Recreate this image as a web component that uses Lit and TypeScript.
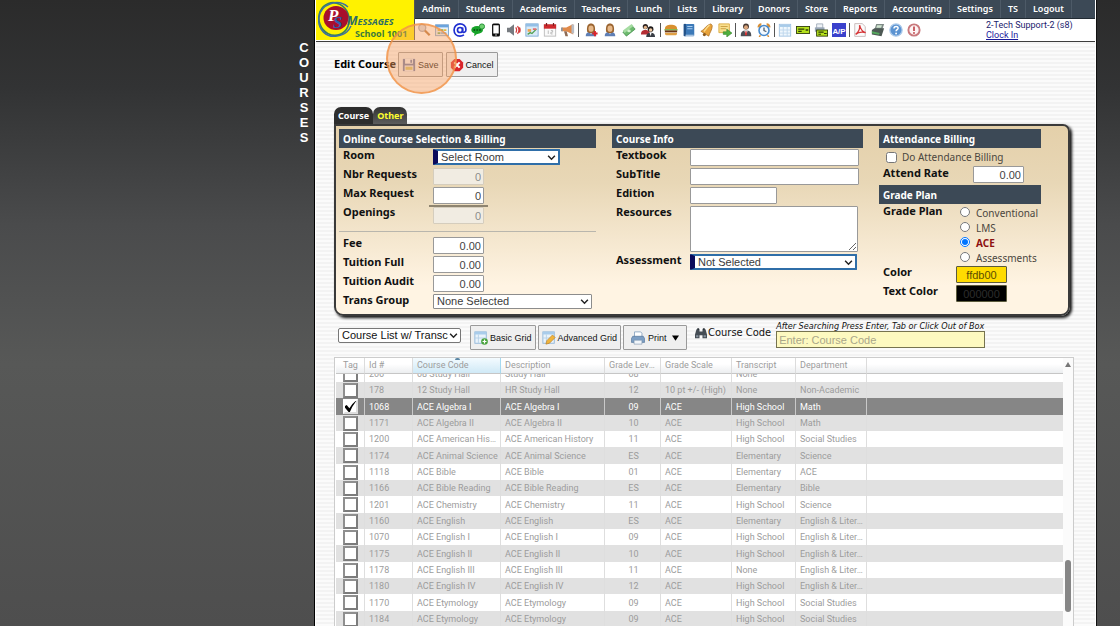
import { LitElement, html, css, svg, TemplateResult } from "lit";
import { customElement, state } from "lit/decorators.js";
import { classMap } from "lit/directives/class-map.js";

const icon = (body: TemplateResult) =>
  html`<svg class="ico" viewBox="0 0 16 16" aria-hidden="true">${body}</svg>`;

const person = svg`<path d="M2 15c0-4 2.500-5 6-5s6 1 6 5z" fill="#5f7fb5"/><path d="M6 9h4l-2 4z" fill="#f3e3c8"/><path d="M3.600 10C2.500 3 5 .5 8 .5s5.500 2.500 4.400 9.500L10 11.500H6z" fill="#9a6430"/><ellipse cx="8" cy="6.500" rx="2.900" ry="3.600" fill="#e7b98a"/>`;

const icons: Record<string, TemplateResult> = {
  search: svg`<circle cx="6" cy="5.500" r="4" fill="#d9dde4" stroke="#a9a9b4" stroke-width="1.500"/><path d="M9 8.500l5.500 5.500" stroke="#b9773c" stroke-width="2.600"/>`,
  windows: svg`<rect x=".7" y="2" width="14.600" height="12.500" fill="#e8f1fa" stroke="#6f9fce"/><rect x="1" y="2.300" width="14" height="2.700" fill="#6aa4dd"/><path d="M3 7h3v2H3zM10 7h3v2h-3z" fill="#e5b93c"/><path d="M6.500 7h3v2h-3zM3 10.500h3v2H3z" fill="#70b35c"/><path d="M6.500 10.500h6.500v2H6.500z" fill="#8bb4df"/>`,
  at: svg`<g fill="none" stroke="#1f2fd0" stroke-width="1.900"><circle cx="8" cy="8" r="2.900"/><path d="M11 5v4.600c0 2 3.800 1.400 3.800-2C14.800 3.500 11.800 1 8 1S1.200 4 1.200 8 4 15 8 15c1.800 0 3.200-.5 4.500-1.400"/></g>`,
  chat: svg`<ellipse cx="7" cy="8" rx="6.700" ry="4.500" fill="#17a329"/><path d="M4 11l-.3 4 4.500-3.500z" fill="#17a329"/><circle cx="12.500" cy="4" r="3" fill="#6fd06f" stroke="#16882a"/><path d="M3 8h1.600M6.200 8h1.600M9.400 8H11" stroke="#053d0b" stroke-width="1.600"/>`,
  phone: svg`<rect x="3.500" y=".5" width="9" height="15" rx="1.800" fill="#0c0c0c"/><rect x="4.900" y="2.600" width="6.200" height="9.400" fill="#fff"/><circle cx="8" cy="13.700" r=".8" fill="#fff"/>`,
  speaker: svg`<path d="M0 5.500h3l5-4v13l-5-4H0z" fill="#777b80"/><path d="M10 5q2 3 0 6M12 3.500q3.300 4.500 0 9M14.200 5q1.600 3 0 6" fill="none" stroke="#d33a3a" stroke-width="1.400"/>`,
  chart: svg`<rect x="1" y="1" width="14" height="14" fill="#d8eaf8" stroke="#7aa9d3"/><path d="M1 1h14v3H1z" fill="#93bfe6"/><path d="M3 7h4v3H3z" fill="#f0a14c"/><path d="M3 13l3-2 2 1 5-5" stroke="#52a052" stroke-width="1.500" fill="none"/><path d="M9 6h4v2H9z" fill="#e26f6f"/>`,
  calendar: svg`<rect x="1.500" y="2" width="13" height="13" fill="#fafafa" stroke="#b9b9b9"/><rect x="1" y="1.500" width="14" height="5" fill="#cf2a2e"/><path d="M4 0v3M12 0v3" stroke="#7d1b1d" stroke-width="1.400"/><path d="M6 8.500v4M9 8.500h2v2H9v2h2" stroke="#b5b5b5" fill="none"/>`,
  horn: svg`<path d="M1 5h5l8-4v12L6 9.500H1z" fill="#e08a4b"/><path d="M12 1.500l3 .5v9.500l-3 1z" fill="#b9bdc4"/><path d="M3.500 9.500h3L8 15H5z" fill="#8f6c55"/><path d="M0 5h2v4.500H0z" fill="#8f949c"/>`,
  personAdd: svg`${person}<path d="M12.500 9v6M9.500 12h6" stroke="#d9232b" stroke-width="2.200"/>`,
  person,
  cash: svg`<path d="M1 10.500L11.500 3 15 7 5 15z" fill="#6cb96d" stroke="#3f8a49" stroke-width=".8"/><path d="M1 8.500L11 1l2 2.500-10 8z" fill="#a5dca2"/><ellipse cx="8" cy="9" rx="2" ry="1.600" fill="#d5f2d0"/>`,
  people: svg`<circle cx="5" cy="4" r="3" fill="#2d2422"/><circle cx="5" cy="5" r="1.900" fill="#e3b48a"/><path d="M0 13c0-4 2-5 5-5s5 1 5 5z" fill="#b52d34"/><circle cx="11" cy="7" r="3.200" fill="#1f1b1b"/><circle cx="11" cy="8" r="2" fill="#efcaa4"/><path d="M6 16c0-4 2-5 5-5s5 1 5 5z" fill="#383c44"/><path d="M10 11.500h2L11 15z" fill="#fff"/>`,
  burger: svg`<path d="M1 7c0-4 3-5 7-5s7 1 7 5z" fill="#d9902f"/><path d="M.5 7h15v1.600H.5z" fill="#7bb241"/><path d="M1 8.500h14v2.200H1z" fill="#6a3418"/><path d="M1 11h14c0 2.500-1 3-3 3H4c-2 0-3-.5-3-3z" fill="#e0a044"/>`,
  book: svg`<rect x="2" y="1" width="12" height="14" rx="1" fill="#3c79b8"/><path d="M2 1h2.500v14H2z" fill="#245288"/><path d="M6 4h6M6 6.500h6" stroke="#a8cdf0" stroke-width="1.200"/><path d="M4 14h9.500" stroke="#dfe9f4"/>`,
  bell: svg`<path d="M12.500 1C6 3 6 7 1 9.500L10 15c1-4 4-7 4-12z" fill="#e8a33b" stroke="#a8681b" stroke-width=".8"/><path d="M11 2.500C7.500 4.500 7 8 4.500 9.500" stroke="#fbdc8c" stroke-width="1.600" fill="none"/><circle cx="5" cy="13.200" r="1.800" fill="#8c5a1d"/>`,
  noteArrow: svg`<path d="M1 1h12v10H1z" fill="#f9df8e" stroke="#d9a93f"/><path d="M3 4h8M3 6.500h6" stroke="#c69a3c"/><path d="M6 10h4V7l6 4.500-6 4.500v-3H6z" fill="#4fae3d" stroke="#2d7d24" stroke-width=".6"/>`,
  suit: svg`<circle cx="8" cy="4" r="3.400" fill="#4a3a33"/><circle cx="8" cy="5" r="2.300" fill="#dba67c"/><path d="M2 15c0-5 1.500-6.500 6-6.500s6 1.500 6 6.500z" fill="#4c4f56"/><path d="M6 8.500h4L8 14z" fill="#fff"/><path d="M7.500 9h1l.8 4L8 14.500 6.700 13z" fill="#d42a2a"/>`,
  clock: svg`<path d="M2 5a3 3 0 013-3.500M14 5a3 3 0 00-3-3.500" stroke="#d98f35" stroke-width="2.600" fill="none"/><circle cx="8" cy="8.500" r="5.700" fill="#f3f9ff" stroke="#4689cc" stroke-width="1.800"/><path d="M8 5v3.800l2.700 1" stroke="#3d4a58" fill="none" stroke-width="1.300"/><path d="M4 14l-1.500 2M12 14l1.500 2" stroke="#d98f35" stroke-width="1.600"/>`,
  sheet: svg`<rect x="1.500" y="1.500" width="13" height="13.500" fill="#eff7fd" stroke="#9ec2e2"/><path d="M2 2h12v2.500H2z" fill="#a8cbe9"/><path d="M6 4.500V15M10.500 4.500V15M2 8h12M2 11.500h12" stroke="#bcd6ec"/>`,
  check: svg`<rect x=".5" y="4" width="15" height="8" fill="#b4e01c" stroke="#2d3b08"/><path d="M2.500 7h7M2.500 9.500h4M11 8h3" stroke="#2d3b08" stroke-width="1.500"/>`,
  printCheck: svg`<path d="M3 1h7v5H3z" fill="#eef2f6" stroke="#8a98a8" stroke-width=".8"/><path d="M1 5h11v5H1z" fill="#98a6b6"/><rect x="3" y="8" width="12.500" height="7" fill="#b4e01c" stroke="#2d3b08"/><path d="M5 10.500h6M5 12.800h3M11.500 12h3" stroke="#2d3b08" stroke-width="1.300"/>`,
  ap: svg`<rect width="16" height="16" fill="#3a41cc"/><text x="8" y="12" text-anchor="middle" font-family="Liberation Sans" font-weight="700" font-size="9" fill="#fff">A/P</text>`,
  pdf: svg`<path d="M2 .7h8.500L14 4v11.300H2z" fill="#fbfbfb" stroke="#c3b6b6"/><path d="M3 13c4-3 5-7 4.500-10.500C9 8 11 10.500 14.500 11 10 10 6 10.500 3 13z" fill="none" stroke="#d7383a" stroke-width="1.500"/>`,
  register: svg`<path d="M6 1h9l-2 6H4z" fill="#7e8a86"/><path d="M7 2.500h5.500l-1 3H6z" fill="#cfe5cf"/><path d="M1 8l3-2h11l-1 3-2 6-11-2z" fill="#4d5854"/><path d="M1 9.500l9 2-1 2-8-1.700z" fill="#54a85c"/>`,
  help: svg`<circle cx="8" cy="8" r="7" fill="#5b93d1" stroke="#a9c8ea" stroke-width="1.500"/><path d="M5.700 6.200C5.700 3 10.600 3.300 10.400 6c-.1 1.600-2.300 1.700-2.300 3.500" stroke="#fff" stroke-width="1.700" fill="none"/><circle cx="8.100" cy="11.900" r="1.100" fill="#fff"/>`,
  alert: svg`<circle cx="8" cy="8" r="6.400" fill="#fdf4f4" stroke="#c9797d" stroke-width="2.200"/><path d="M8 4v5" stroke="#c24b50" stroke-width="2"/><circle cx="8" cy="11.400" r="1.100" fill="#c24b50"/>`,
};

const toolGroups: [string, string][][] = [
  [["search", "Search"], ["windows", "Dashboard"], ["at", "Email"], ["chat", "Chat"], ["phone", "Text message"], ["speaker", "Announcements"], ["chart", "Charts"], ["calendar", "Calendar"], ["horn", "Broadcast"]],
  [["personAdd", "Add student"], ["person", "Student"], ["cash", "Payments"], ["people", "Families"]],
  [["burger", "Lunch"], ["book", "Grade book"], ["bell", "Bell"], ["noteArrow", "Send note"]],
  [["suit", "Staff"], ["clock", "Time clock"]],
  [["sheet", "Ledger"], ["check", "Checks"], ["printCheck", "Print checks"], ["ap", "Accounts payable"]],
  [["pdf", "PDF"], ["register", "Register"], ["help", "Help"], ["alert", "Alerts"]],
];

const menu = ["Admin", "Students", "Academics", "Teachers", "Lunch", "Lists", "Library", "Donors", "Store", "Reports", "Accounting", "Settings", "TS", "Logout"];

type Row = [string, string, string, string, string, string, string];
const courses: Row[] = [
  ["206", "08 Study Hall", "Study Hall", "08", "", "None", ""],
  ["178", "12 Study Hall", "HR Study Hall", "12", "10 pt +/- (High)", "None", "Non-Academic"],
  ["1068", "ACE Algebra I", "ACE Algebra I", "09", "ACE", "High School", "Math"],
  ["1171", "ACE Algebra II", "ACE Algebra II", "10", "ACE", "High School", "Math"],
  ["1200", "ACE American History", "ACE American History", "11", "ACE", "High School", "Social Studies"],
  ["1174", "ACE Animal Science", "ACE Animal Science", "ES", "ACE", "Elementary", "Science"],
  ["1118", "ACE Bible", "ACE Bible", "01", "ACE", "Elementary", "ACE"],
  ["1166", "ACE Bible Reading", "ACE Bible Reading", "ES", "ACE", "Elementary", "Bible"],
  ["1201", "ACE Chemistry", "ACE Chemistry", "11", "ACE", "High School", "Science"],
  ["1160", "ACE English", "ACE English", "ES", "ACE", "Elementary", "English & Literature"],
  ["1070", "ACE English I", "ACE English I", "09", "ACE", "High School", "English & Literature"],
  ["1175", "ACE English II", "ACE English II", "10", "ACE", "High School", "English & Literature"],
  ["1178", "ACE English III", "ACE English III", "11", "ACE", "None", "English & Literature"],
  ["1180", "ACE English IV", "ACE English IV", "12", "ACE", "High School", "English & Literature"],
  ["1170", "ACE Etymology", "ACE Etymology", "09", "ACE", "High School", "Social Studies"],
  ["1184", "ACE Etymology", "ACE Etymology", "09", "ACE", "High School", "Social Studies"],
];

const base = css`
  * { box-sizing: border-box; }
  button, input, select, textarea { margin: 0; font-family: "Liberation Sans", Arial, sans-serif; }
  .ico { display: block; width: 14px; height: 14px; }
  select {
    appearance: none; border: 1px solid #8c8c8c; border-radius: 1px; color: #3b3b3b;
    font-size: 11px; height: 15px; line-height: 13px; padding: 0 14px 0 3px;
    background: #fff url('data:image/svg+xml,<svg xmlns="http://www.w3.org/2000/svg" viewBox="0 0 8 8"><path d="M1 2.500l3 3 3-3" fill="none" stroke="%23222" stroke-width="1.300"/></svg>') no-repeat right 2px center / 9px 9px;
  }
`;

@customElement("top-bar")
export class TopBar extends LitElement {
  static styles = [base, css`
    :host { display: flex; height: 42px; border-bottom: 1px solid #3c3c3c; background: #fff; }
    .brand { flex: none; width: 99px; background: #fff200; border-right: 1px solid #555; display: flex; text-decoration: none; height: 40px; }
    .brand svg { width: 98px; height: 40px; display: block; }
    .right { flex: 1; min-width: 0; display: flex; flex-direction: column; }
    nav { display: flex; height: 19px; background: #3c4956; border-bottom: 1px solid #222b33; }
    nav a { padding: 0 7px; font: 600 9px/18px "Noto Sans", sans-serif; color: #fff; text-decoration: none; border-right: 1px solid #4d5a67; white-space: nowrap; }
    .tools { display: flex; flex: 1; align-items: center; gap: 3px; padding-left: 2px; }
    .group { display: flex; gap: 4px; }
    .group.wide { gap: 5px; padding: 0 2px; }
    .tool { border: 0; padding: 0; background: none; }
    .sep { width: 1px; height: 14px; background: #555; }
    .user { margin-left: auto; width: 109px; font: 9px/10px Roboto, sans-serif; color: #1c1c6e; white-space: nowrap; }
    .user a { color: #1a1a9c; display: block; }
  `];

  render() {
    return html`
      <a class="brand" href="#messages" aria-label="Messages, School 1001">
        <svg viewBox="0 0 98 40">
          <ellipse cx="18" cy="19" rx="15" ry="16.500" fill="none" stroke="#35805e" stroke-width="1.600" transform="rotate(-20 18 19)"/>
          <path d="M32 7C22-2 5 4 3 17s8 21 18 19 12-6 14-10" fill="none" stroke="#3f6f9f" stroke-width="1.500"/>
          <ellipse cx="20" cy="18" rx="12.500" ry="12" fill="#a80f2c"/>
          <text x="12" y="21" font-family="Liberation Serif" font-style="italic" font-weight="700" font-size="17" fill="#fff">P</text>
          <text x="17" y="28" font-family="Liberation Serif" font-style="italic" font-weight="700" font-size="17" fill="#2f5faa">S</text>
          <text x="31" y="25" font-family="Open Sans" font-style="italic" font-weight="700" font-size="12" fill="#2c6b66">M<tspan font-size="9">ESSAGES</tspan></text>
          <text x="39" y="37" font-family="Open Sans" font-weight="700" font-size="9" fill="#3b7a3b">School 1001</text>
        </svg>
      </a>
      <div class="right">
        <nav>${menu.map((m) => html`<a href="#${m.toLowerCase()}">${m}</a>`)}</nav>
        <div class="tools">
          ${toolGroups.map((g, i) => html`
            ${i ? html`<span class="sep"></span>` : ""}
            <div class=${classMap({ group: true, wide: i === 1 })}>
              ${g.map(([k, label]) => html`<button class="tool" aria-label=${label}>${icon(icons[k])}</button>`)}
            </div>`)}
          <div class="user">2-Tech Support-2 (s8)<a href="#clock">Clock In</a></div>
        </div>
      </div>`;
  }
}

@customElement("course-form")
export class CourseForm extends LitElement {
  @state() plan = "ACE";

  static styles = [base, css`
    :host { display: block; font-family: "Noto Sans", sans-serif; }
    .tabs { display: flex; }
    .tab { border: 0; height: 17px; padding: 0 4px; border-radius: 7px 7px 0 0; background: #2d2d2d; color: #fff; font: 700 9px/17px "Noto Sans", sans-serif; }
    .tab.other { background: linear-gradient(#333, #5c5c5c); color: #ffff2e; }
    .panel {
      display: grid; grid-template-columns: 257fr 251fr 162fr; column-gap: 16px; align-items: start;
      padding: 3px 27px 2px 3px; border: 2px solid #3a3a3a; border-radius: 0 7px 9px 9px;
      background: linear-gradient(#e4d0aa, #e8d7b6 30%, #fff4e3 85%); box-shadow: 2px 2px 3px #111;
    }
    h2 { margin: 0; height: 19px; padding-left: 4px; background: #3c4956; color: #fff; font-size: 10px; line-height: 20px; }
    .row { display: flex; align-items: flex-start; height: 19px; padding-left: 4px; }
    .row.tall { height: 48px; }
    .name { flex: none; width: 90px; font-size: 11px; font-weight: 700; line-height: 13px; color: #111; }
    .info .name { width: 74px; }
    .grade .name { width: 73px; }
    input.box { width: 51px; height: 17px; margin-top: 1px; border: 1px solid #999; border-radius: 1px; padding: 0 2px; text-align: right; font-size: 11px; color: #444; background: #fff; }
    input.box:disabled { background: #f1ece2; border-color: #d5cdbd; color: #8c8c8c; }
    input.long { width: 169px; }
    input.mid { width: 87px; }
    textarea { width: 168px; height: 46px; margin-top: 1px; border: 1px solid #999; border-radius: 1px; background: #fff; }
    select { margin-top: 1px; }
    select.key { border: 2px solid #2f6ea8; border-left: 5px solid #0b0b5c; height: 16px; line-height: 12px; width: 127px; }
    .info select.key { width: 167px; }
    select.group { width: 159px; }
    .sum { display: flex; margin-left: -4px; padding-left: 4px; border-top: 2px solid #8e8470; width: 59px; }
    .sum input.box { margin: 0; }
    hr { margin: 7px 0 4px; border: 0; height: 1px; background: #b9b6ad; }
    .opt { display: flex; align-items: center; font-size: 10px; color: #4a463e; white-space: nowrap; }
    .opt.tick { height: 18px; padding-left: 7px; gap: 5px; }
    .opt.tick input { width: 11px; height: 11px; }
    .attend input.box { margin-top: 0; }
    fieldset { display: flex; height: 61px; margin: 0; padding: 0 0 0 4px; border: 0; min-width: 0; }
    .plans { padding-left: 4px; display: flex; flex-direction: column; }
    .plans .opt { height: 15px; gap: 6px; line-height: 18px; align-items: flex-start; }
    .plans input { width: 10px; height: 10px; margin-top: 3px; }
    .plans .on { color: #8e1010; font-weight: 700; }
    input.box.swatch { text-align: center; border: 1px solid #5c5b3d; }
    input.gold { background: #ffdb00; color: #5c4d00; }
    input.ink { background: #000; color: #2d2d2d; }
  `];

  private field(id: string, name: string, value: string, off = false) {
    return html`<div class="row"><label class="name" for=${id}>${name}</label>
      <input class="box" id=${id} .value=${value} ?disabled=${off}></div>`;
  }

  render() {
    return html`
      <div class="tabs"><button class="tab">Course</button><button class="tab other">Other</button></div>
      <div class="panel">
        <section>
          <h2>Online Course Selection &amp; Billing</h2>
          <div class="row"><label class="name" for="room">Room</label><select class="key" id="room"><option>Select Room</option></select></div>
          ${this.field("nbr", "Nbr Requests", "0", true)}
          ${this.field("max", "Max Request", "0")}
          <div class="row"><label class="name" for="open">Openings</label><div class="sum"><input class="box" id="open" .value=${"0"} disabled></div></div>
          <hr>
          ${this.field("fee", "Fee", "0.00")}
          ${this.field("full", "Tuition Full", "0.00")}
          ${this.field("audit", "Tuition Audit", "0.00")}
          <div class="row"><label class="name" for="trans">Trans Group</label><select class="group" id="trans"><option>None Selected</option></select></div>
        </section>
        <section class="info">
          <h2>Course Info</h2>
          <div class="row"><label class="name" for="text">Textbook</label><input class="box long" id="text"></div>
          <div class="row"><label class="name" for="sub">SubTitle</label><input class="box long" id="sub"></div>
          <div class="row"><label class="name" for="ed">Edition</label><input class="box mid" id="ed"></div>
          <div class="row tall"><label class="name" for="res">Resources</label><textarea id="res"></textarea></div>
          <div class="row"><label class="name" for="asmt">Assessment</label><select class="key" id="asmt"><option>Not Selected</option></select></div>
        </section>
        <section>
          <div class="attend">
            <h2>Attendance Billing</h2>
            <label class="opt tick"><input type="checkbox">Do Attendance Billing</label>
            ${this.field("rate", "Attend Rate", "0.00")}
          </div>
          <div class="grade">
            <h2>Grade Plan</h2>
            <fieldset aria-label="Grade Plan">
              <span class="name">Grade Plan</span>
              <div class="plans">
                ${["Conventional", "LMS", "ACE", "Assessments"].map((p) => html`
                  <label class=${classMap({ opt: true, on: p === this.plan })}>
                    <input type="radio" name="plan" .checked=${p === this.plan} @change=${() => (this.plan = p)}>${p}</label>`)}
              </div>
            </fieldset>
            <div class="row"><label class="name" for="color">Color</label><input class="box swatch gold" id="color" .value=${"ffdb00"}></div>
            <div class="row"><label class="name" for="tcolor">Text Color</label><input class="box swatch ink" id="tcolor" .value=${"000000"}></div>
          </div>
        </section>
      </div>`;
  }
}

@customElement("course-grid")
export class CourseGrid extends LitElement {
  @state() tagged = new Set(["1068"]);

  static styles = [base, css`
    :host { display: flex; min-height: 0; border: 1px solid #ccc; border-bottom: 0; background: #fff; font: 9px/16px Roboto, sans-serif; color: #9c9c9c; }
    .scroll { flex: 1; min-width: 0; overflow: hidden; padding-left: 1px; }
    table { width: 100%; table-layout: fixed; border-collapse: separate; border-spacing: 0; margin-bottom: 20px; }
    .w-tag { width: 29px; } .w-id { width: 48px; } .w-code { width: 88px; } .w-desc { width: 104px; }
    .w-lev { width: 56px; } .w-scale { width: 71px; } .w-tr { width: 64px; } .w-dep { width: 71px; }
    th { position: sticky; top: 0; z-index: 1; height: 16px; padding: 0 3px 0 4px; font-weight: 400; text-align: left; background: linear-gradient(#fff 40%, #eceef0); border-right: 1px solid #dcdcdc; border-bottom: 1px solid #c6c6c6; line-height: 15px; white-space: nowrap; overflow: hidden; text-overflow: ellipsis; }
    th.sorted { background: linear-gradient(#f4fbff, #cfe9f6); border-right-color: #a5d9f0; }
    th.sorted::before { content: ""; display: block; width: 5px; height: 2px; margin: 0 auto -2px; background: #5b87a5; border-radius: 3px 3px 0 0; }
    td { height: 16px; padding: 0 2px 0 4px; border-right: 1px solid #dedede; white-space: nowrap; overflow: hidden; text-overflow: ellipsis; }
    tr:nth-child(3n) td { height: 17px; }
    tr:nth-child(even) td { background: #e1e1e1; }
    tr.on td { background: #868686; color: #fff; border-right-color: #c9c9c9; }
    th:last-child, td:last-child { border-right: 0; }
    .mid { text-align: center; }
    td.tag { padding: 0; line-height: 0; text-align: center; text-overflow: clip; }
    td.tag input { appearance: none; width: 15px; height: 15px; margin: 0; border: 2px solid; border-color: #8f8f8f #7c7c7c #7c7c7c #8f8f8f; background: #fff; vertical-align: middle; }
    td.tag input:checked { background: #fff url('data:image/svg+xml,<svg xmlns="http://www.w3.org/2000/svg" viewBox="0 0 12 12"><path d="M0 6l2.500-1.500L5 7.500Q8 2.500 12 0 7.500 5.500 5 12z" fill="%23000"/></svg>') center / 13px 13px no-repeat border-box; border-color: #fff #ddd #ddd #fff; }
    .bar { flex: none; width: 10px; background: #fbfbfb; display: flex; flex-direction: column; align-items: center; padding: 4px 0 14px; }
    .up { width: 6px; height: 5px; }
    .thumb { margin-top: auto; width: 6px; height: 52px; border-radius: 3px; background: #868686; }
  `];

  firstUpdated() {
    this.renderRoot.querySelector(".scroll")!.scrollTop = 8;
  }

  private toggle(id: string) {
    const next = new Set(this.tagged);
    next.has(id) ? next.delete(id) : next.add(id);
    this.tagged = next;
  }

  render() {
    return html`
      <div class="scroll">
        <table>
          <colgroup><col class="w-tag"><col class="w-id"><col class="w-code"><col class="w-desc"><col class="w-lev"><col class="w-scale"><col class="w-tr"><col class="w-dep"><col></colgroup>
          <thead><tr><th class="mid">Tag</th><th>Id #</th><th class="sorted">Course Code</th><th>Description</th><th>Grade Levels</th><th>Grade Scale</th><th>Transcript</th><th>Department</th><th></th></tr></thead>
          <tbody>
            ${courses.map((r) => html`<tr class=${classMap({ on: this.tagged.has(r[0]) })}>
              <td class="tag"><input type="checkbox" aria-label="Tag ${r[0]}" .checked=${this.tagged.has(r[0])} @change=${() => this.toggle(r[0])}></td>
              ${r.map((c, i) => html`<td class=${classMap({ mid: i === 3 })}>${c}</td>`)}
              <td></td></tr>`)}
          </tbody>
        </table>
      </div>
      <div class="bar"><svg class="up" viewBox="0 0 6 5"><path d="M3 0l3 5H0z" fill="#777"/></svg><div class="thumb"></div></div>`;
  }
}

@customElement("app-root")
export class AppRoot extends LitElement {
  static styles = [base, css`
    :host { display: grid; grid-template-columns: 315px minmax(0, 1fr) 24px; height: 100vh; overflow: hidden; background: linear-gradient(#2b2b2b, #323334 14%, #4a4b4c 36%, #575857 58%, #4e4e4e); }
    .side { display: flex; justify-content: flex-end; padding: 40px 5px 0 0; border-right: 1px solid #000; }
    .side h1 { margin: 0; width: 10px; font: 700 13px/15px "Liberation Sans", Arial, sans-serif; color: #fff; text-align: center; word-break: break-all; }
    .page { display: flex; flex-direction: column; min-height: 0; min-width: 0; border-left: 1px solid #fff; border-right: 1px solid #fff; background: repeating-linear-gradient(#fbfbfb 0 2px, #f3f3f3 2px 4px); }
    .edge { border-left: 1px solid #111; }
    main { flex: 1; min-height: 0; display: flex; flex-direction: column; padding: 10px 25px 0 18px; }
    .head { display: flex; gap: 3px; height: 55px; align-items: flex-start; font: 700 11px/24px "Noto Sans", sans-serif; color: #000; }
    .head span { width: 61px; white-space: nowrap; }
    .btn { display: flex; align-items: center; gap: 2px; height: 25px; padding: 0 3px; border: 1px solid #9a9a9a; border-radius: 1px; background: #efefef; color: #111; font-size: 9px; white-space: nowrap; }
    .save { position: relative; display: flex; }
    .halo { position: absolute; left: -12px; top: -29px; width: 71px; height: 71px; border-radius: 50%; border: 2px solid rgba(240, 145, 70, .75); background: rgba(248, 160, 95, .45); z-index: 2; pointer-events: none; }
    .bar { display: flex; align-items: flex-start; margin: 9px 0 6px; height: 26px; }
    .bar select { width: 123px; margin: 3px 9px 0 4px; padding: 0 12px 0 3px; color: #111; border-radius: 2px; border-color: #777; }
    .btns { display: flex; gap: 2px; }
    .btn.print { padding: 0 7px; gap: 3px; }
    .find { display: flex; gap: 1px; margin-left: 8px; font: 11px/16px "DejaVu Sans Condensed", "Noto Sans", sans-serif; color: #111; white-space: nowrap; }
    .find .ico { width: 12px; margin-top: 1px; }
    .query { display: flex; flex-direction: column; margin: -4px 0 0 5px; font: italic 9px/10px "DejaVu Sans Condensed", "Noto Sans", sans-serif; color: #111; white-space: nowrap; width: 209px; }
    .query input { height: 17px; padding: 0 2px; border: 1px solid #76734f; background: #fdf9c0; font-size: 11px; }
    .query input::placeholder { color: #aaa78a; opacity: 1; }
    course-grid { flex: 1; margin-right: -4px; }
  `];

  render() {
    return html`
      <div class="side"><h1>COURSES</h1></div>
      <div class="page">
        <top-bar></top-bar>
        <main>
          <div class="head"><span>Edit Course</span>
            <div class="save">
              <button class="btn">${icon(svg`<path d="M1 1h14v14H1z" fill="#6b7aa8"/><path d="M3.500 1h9v5.500h-9z" fill="#f1f3f8"/><path d="M9.500 2h2v3.500h-2z" fill="#6b7aa8"/><path d="M3 8.500h10V15H3z" fill="#e9ecf2"/><path d="M4 10h8v3.500H4z" fill="#cfc26a"/>`)}Save</button>
              <div class="halo"></div>
            </div>
            <button class="btn">${icon(svg`<path d="M5 1h6l4 4v6l-4 4H5l-4-4V5z" fill="#d9262b"/><path d="M5 5l6 6M11 5l-6 6" stroke="#fff" stroke-width="2.400"/>`)}Cancel</button>
          </div>
          <course-form></course-form>
          <div class="bar">
            <select aria-label="Course list"><option>Course List w/ Transcr</option></select>
            <div class="btns">
              <button class="btn">${icon(svg`<rect x="1" y="1" width="13" height="13" fill="#e9f3fb" stroke="#8db3d8"/><path d="M1 1h13v3H1z" fill="#a9cceb"/><path d="M5 4v10M1 8h13" stroke="#b5cfe6"/><circle cx="12" cy="12" r="3.800" fill="#49a23c"/><path d="M12 9.800v4.400M9.800 12h4.400" stroke="#fff" stroke-width="1.400"/>`)}Basic Grid</button>
              <button class="btn">${icon(svg`<rect x="1" y="1" width="13" height="13" fill="#e9f3fb" stroke="#8db3d8"/><path d="M1 1h13v3H1z" fill="#a9cceb"/><path d="M5 4v10M1 8h13" stroke="#b5cfe6"/><path d="M4.500 15l1-4L12 4.500l3 3L8.500 14z" fill="#f0b43c" stroke="#b67a1e" stroke-width=".7"/>`)}Advanced Grid</button>
              <button class="btn print">${icon(svg`<path d="M4 1h7l1.500 1.500V7H4z" fill="#fff" stroke="#8aa5c0"/><path d="M2 6h12l1.500 2.500V13H.5V8.500z" fill="#7d9fc4" stroke="#4e6f94" stroke-width=".7"/><path d="M3.500 10.500h9V15h-9z" fill="#f2f6fa" stroke="#7b93ab" stroke-width=".7"/>`)}Print&nbsp;<svg width="7" height="6" viewBox="0 0 8 6" aria-hidden="true"><path d="M0 0h8L4 6z" fill="#000"/></svg></button>
            </div>
            <label class="find" for="q">${icon(svg`<path d="M2 3h4v3h4V3h4l2 7v5h-6v-4H6v4H0v-5z" fill="#454d55"/><path d="M3 1.500h2.500V4H3zM10.500 1.500H13V4h-2.500z" fill="#2c3238"/><path d="M1.500 11h3v2.500h-3zM11.500 11h3v2.500h-3z" fill="#87939e"/>`)}Course Code</label>
            <div class="query"><span>After Searching Press Enter, Tab or Click Out of Box</span>
              <input id="q" placeholder="Enter: Course Code"></div>
          </div>
          <course-grid></course-grid>
        </main>
      </div>
      <div class="edge"></div>`;
  }
}
